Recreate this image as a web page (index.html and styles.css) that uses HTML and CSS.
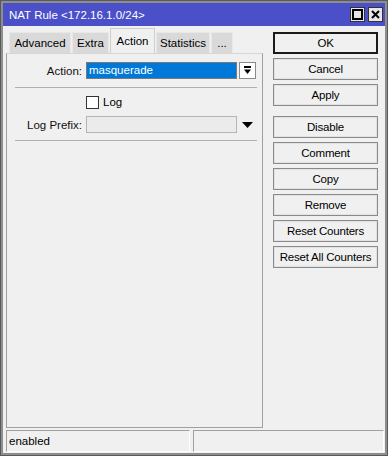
FILE: index.html
```html
<!DOCTYPE html>
<html lang="en">
<head>
  <meta charset="UTF-8">
  <title>NAT Rule</title>
  <link rel="stylesheet" href="styles.css">
</head>
<body>
  <div class="window">
    <div class="titlebar">
      <span class="title">NAT Rule &lt;172.16.1.0/24&gt;</span>
      <span class="winbtn">
        <svg width="11" height="11" viewBox="0 0 11 11"><rect x="1" y="1" width="9" height="9" fill="none" stroke="#000" stroke-width="2"/></svg>
      </span>
      <span class="winbtn">
        <svg width="9" height="9" viewBox="0 0 9 9"><path d="M1 1L8 8M8 1L1 8" stroke="#000" stroke-width="2"/></svg>
      </span>
    </div>

    <div class="main">
      <div class="left">
        <div class="tabs">
          <div class="tab w-adv">Advanced</div>
          <div class="tab w-extra">Extra</div>
          <div class="tab active w-action">Action</div>
          <div class="tab w-stats">Statistics</div>
          <div class="tab w-more">...</div>
        </div>
        <div class="panel">
          <div class="row">
            <label class="lbl">Action:</label>
            <div class="select">masquerade</div>
            <div class="dropbtn">
              <svg width="9" height="9" viewBox="0 0 9 9"><rect x="1" y="0" width="7" height="2" fill="#000"/><path d="M1 3.5H8L4.5 8Z" fill="#000"/></svg>
            </div>
          </div>
          <div class="sep"></div>
          <div class="row check-row">
            <span class="checkbox"></span>
            <span>Log</span>
          </div>
          <div class="row">
            <label class="lbl">Log Prefix:</label>
            <div class="input"></div>
            <div class="arrow">
              <svg width="11" height="6" viewBox="0 0 11 6"><path d="M0 0H11L5.5 6Z" fill="#000"/></svg>
            </div>
          </div>
          <div class="sep last"></div>
        </div>
      </div>

      <div class="buttons">
        <div class="btn default">OK</div>
        <div class="btn">Cancel</div>
        <div class="btn">Apply</div>
        <div class="btn spaced">Disable</div>
        <div class="btn">Comment</div>
        <div class="btn">Copy</div>
        <div class="btn">Remove</div>
        <div class="btn">Reset Counters</div>
        <div class="btn">Reset All Counters</div>
      </div>
    </div>

    <div class="status">
      <div class="cell first">enabled</div>
      <div class="cell"></div>
    </div>
  </div>
</body>
</html>
```

FILE: styles.css
```css
body {
  margin: 0;
  font-family: "Liberation Sans", Arial, sans-serif;
  font-size: 11.5px;
  color: #000;
}

.window {
  width: 388px;
  height: 456px;
  box-sizing: border-box;
  border: 3px solid #8e8e8e;
  outline: 1px solid #5a5a5a;
  outline-offset: -1px;
  background: #f0f0f0;
  display: flex;
  flex-direction: column;
}

.titlebar {
  height: 23px;
  background: #4b4fc8;
  display: flex;
  align-items: center;
  padding: 0 2px 0 6px;
  gap: 3px;
  flex-shrink: 0;
}

.title {
  color: #fff;
  font-size: 11.5px;
  flex: 1;
}

.winbtn {
  width: 15px;
  height: 15px;
  box-sizing: border-box;
  background: #e6e6e6;
  border: 1px solid #333;
  display: flex;
  align-items: center;
  justify-content: center;
}

.main {
  flex: 1;
  display: flex;
  padding: 0 0 0 3px;
}

.left {
  width: 257px;
  display: flex;
  flex-direction: column;
}

.tabs {
  display: flex;
  align-items: flex-end;
  height: 27px;
  padding-left: 3px;
  gap: 1px;
}

.tab {
  height: 21px;
  box-sizing: border-box;
  text-align: center;
  line-height: 21px;
  background: #d9d9d9;
  border: 1px solid #e8e8e8;
  border-bottom: none;
}

.tab.active {
  height: 25px;
  line-height: 25px;
  background: #f0f0f0;
  border: 1px solid #cfcfcf;
  border-bottom: none;
}

.w-adv { width: 62px; }
.w-extra { width: 37px; }
.w-action { width: 45px; }
.w-stats { width: 54px; }
.w-more { width: 22px; }

.panel {
  flex: 1;
  border: 1px solid #a0a0a0;
  border-top: 1px solid #d6d6d6;
  padding: 8px 5px 0 8px;
}

.row {
  display: flex;
  align-items: center;
  height: 17px;
}

.lbl {
  width: 67px;
  text-align: right;
  padding-right: 4px;
  color: #111;
}

.select {
  width: 151px;
  height: 17px;
  box-sizing: border-box;
  background: #0078d7;
  color: #fff;
  border: 1px solid #7a7a7a;
  padding-left: 2px;
  line-height: 15px;
}

.dropbtn {
  width: 17px;
  height: 17px;
  box-sizing: border-box;
  margin-left: 2px;
  background: #fff;
  border: 1px solid #8a8a8a;
  display: flex;
  align-items: center;
  justify-content: center;
}

.sep {
  height: 0;
  border-top: 1px solid #b0b0b0;
  margin: 8px 0 7px;
}

.sep.last {
  margin-top: 7px;
}

.check-row {
  padding-left: 71px;
  height: 14px;
  margin-bottom: 7px;
}

.checkbox {
  width: 13px;
  height: 13px;
  box-sizing: border-box;
  border: 1px solid #333;
  background: #fff;
  margin-right: 4px;
}

.input {
  width: 151px;
  height: 17px;
  box-sizing: border-box;
  background: #ebebeb;
  border: 1px solid #b5b5b5;
}

.arrow {
  margin-left: 5px;
  display: flex;
  align-items: center;
}

.buttons {
  margin-left: 10px;
  padding-top: 6px;
  display: flex;
  flex-direction: column;
  gap: 4px;
  width: 105px;
}

.btn {
  height: 22px;
  box-sizing: border-box;
  border: 1px solid #8a8a8a;
  box-shadow: inset 0 0 0 1px #e2e2e2;
  background: #f0f0f0;
  text-align: center;
  line-height: 20px;
  letter-spacing: -0.2px;
}

.btn.default {
  border: 2px solid #1a1a1a;
  box-shadow: none;
  line-height: 18px;
}

.btn.spaced {
  margin-top: 6px;
}

.status {
  display: flex;
  gap: 3px;
  padding: 2px 1px 1px 3px;
  flex-shrink: 0;
}

.cell {
  height: 22px;
  box-sizing: border-box;
  border-top: 1px solid #a0a0a0;
  border-left: 1px solid #a0a0a0;
  border-bottom: 1px solid #fff;
  border-right: 1px solid #fff;
  flex: 1;
  line-height: 20px;
  padding-left: 2px;
}

.cell.first {
  flex: 0 0 184px;
}
```
